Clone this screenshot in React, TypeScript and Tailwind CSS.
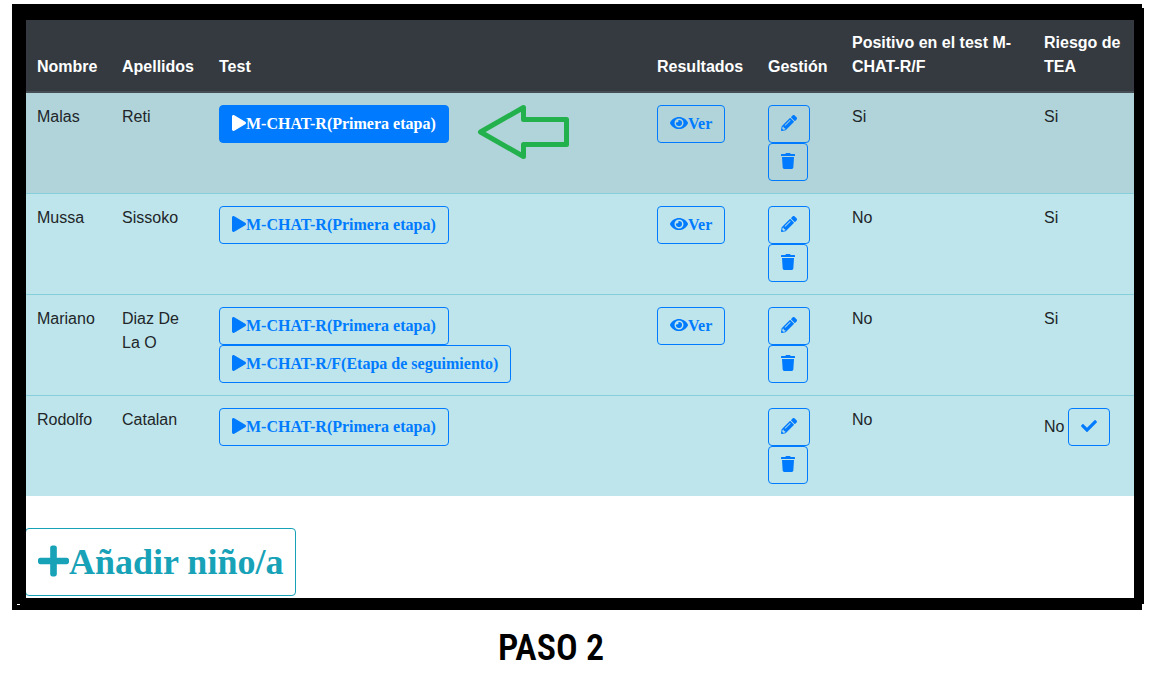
import type { ReactNode } from "react";
import { FaCheck, FaEye, FaPencilAlt, FaPlay, FaPlus, FaTrash } from "react-icons/fa";

type Child = {
  name: string;
  surname: string;
  followUp?: boolean;
  results: boolean;
  positive: string;
  risk: string;
  active?: boolean;
  confirm?: boolean;
};

const children: Child[] = [
  { name: "Malas", surname: "Reti", results: true, positive: "Si", risk: "Si", active: true },
  { name: "Mussa", surname: "Sissoko", results: true, positive: "No", risk: "Si" },
  { name: "Mariano", surname: "Diaz De La O", followUp: true, results: true, positive: "No", risk: "Si" },
  { name: "Rodolfo", surname: "Catalan", results: false, positive: "No", risk: "No", confirm: true },
];

function Button({ children, filled, label }: { children: ReactNode; filled?: boolean; label?: string }) {
  const tone = filled ? "bg-[#007bff] text-white" : "text-[#007bff]";
  return (
    <button
      type="button"
      aria-label={label}
      className={`inline-flex h-[38px] items-center rounded border border-[#007bff] px-3 font-['Liberation_Serif',serif] text-base font-bold whitespace-nowrap ${tone}`}
    >
      {children}
    </button>
  );
}

function Arrow() {
  return (
    <svg
      className="absolute top-[9px] left-[269px] h-[60px] w-24"
      viewBox="0 0 96 60"
      fill="none"
      stroke="#22b14c"
      strokeWidth="5"
      strokeLinejoin="round"
      aria-hidden="true"
    >
      <path d="M4.500 30 47.500 5.500V17.500H90.500V42.500H47.500V54.500Z" />
    </svg>
  );
}

function Row({ child }: { child: Child }) {
  const cell = child.active ? "p-3" : "border-t border-[#86cfda] p-3";
  return (
    <tr className={child.active ? "bg-[#b0d4d9] align-top" : "bg-[#bee5eb] align-top"}>
      <td className={cell}>{child.name}</td>
      <td className={cell}>{child.surname}</td>
      <td className={`relative ${cell}`}>
        <div className="flex flex-col items-start">
          <Button filled={child.active}>
            <FaPlay className="mb-0.5 h-4 w-3.5" />
            M-CHAT-R(Primera etapa)
          </Button>
          {child.followUp && (
            <Button>
              <FaPlay className="mb-0.5 h-4 w-3.5" />
              M-CHAT-R/F(Etapa de seguimiento)
            </Button>
          )}
        </div>
        {child.active && <Arrow />}
      </td>
      <td className={cell}>
        {child.results && (
          <Button>
            <FaEye className="mb-0.5 h-4 w-[18px]" />
            Ver
          </Button>
        )}
      </td>
      <td className={cell}>
        <div className="flex flex-col items-start">
          <Button label="Editar">
            <FaPencilAlt className="mb-0.5 size-4" />
          </Button>
          <Button label="Eliminar">
            <FaTrash className="mb-0.5 h-4 w-3.5" />
          </Button>
        </div>
      </td>
      <td className={cell}>{child.positive}</td>
      <td className={cell}>
        {child.confirm ? (
          <div className="flex items-center gap-1">
            {child.risk}
            <Button label="Confirmar">
              <FaCheck className="mb-0.5 size-4" />
            </Button>
          </div>
        ) : (
          child.risk
        )}
      </td>
    </tr>
  );
}

const headings = ["Nombre", "Apellidos", "Test", "Resultados", "Gestión", "Positivo en el test M-CHAT-R/F", "Riesgo de TEA"];

export default function App() {
  return (
    <main className="min-h-screen bg-white pt-1 pr-[7px] pl-3 font-['Liberation_Sans',Arial,sans-serif] text-base text-[#212529]">
      <div className="relative bg-black pt-4 pr-2.5 pb-3 pl-3.5">
        <div className="overflow-hidden bg-white">
          <div className="-mt-px -ml-px pb-0.5">
            <table className="w-full table-fixed border-separate border-spacing-0">
              <colgroup>
                <col className="w-[85px]" />
                <col className="w-[97px]" />
                <col />
                <col className="w-[111px]" />
                <col className="w-[84px]" />
                <col className="w-[192px]" />
                <col className="w-[102px]" />
              </colgroup>
              <thead>
                <tr className="bg-[#343a40] text-left align-bottom text-white">
                  {headings.map((heading) => (
                    <th key={heading} scope="col" className="border-b-2 border-[#454d55] p-3 font-bold">
                      {heading}
                    </th>
                  ))}
                </tr>
              </thead>
              <tbody>
                {children.map((child) => (
                  <Row key={child.name} child={child} />
                ))}
              </tbody>
            </table>
            <button
              type="button"
              className="mt-8 flex items-center rounded border border-[#17a2b8] px-3 py-1.5 font-['Liberation_Serif',serif] text-[36px] leading-[54px] font-bold text-[#17a2b8]"
            >
              <FaPlus className="mb-0.5 h-9 w-[31px]" />
              Añadir niño/a
            </button>
          </div>
        </div>
        <span className="absolute top-0 right-0 h-1 w-0.5 bg-white" />
        <span className="absolute right-0 bottom-0 h-1.5 w-0.5 bg-white" />
        <span className="absolute bottom-[5px] left-[5px] h-px w-[3px] bg-white" />
      </div>
      <p className="mt-4 pr-[54px] text-center font-['Roboto_Condensed',Roboto,sans-serif] text-[36px] leading-[44px] font-semibold text-black">
        PASO 2
      </p>
    </main>
  );
}
